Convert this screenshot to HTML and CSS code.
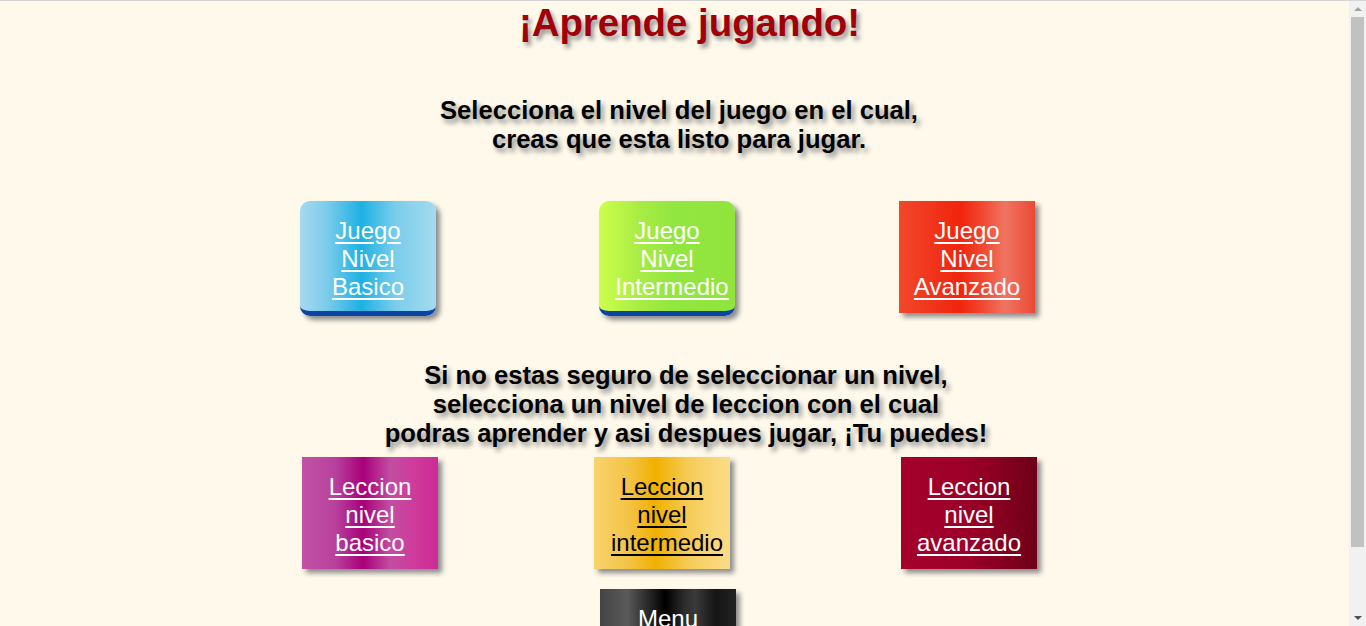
FILE: index.html
```html
<!DOCTYPE html>
<html lang="es">
<head>
<meta charset="utf-8">
<title>¡Aprende jugando!</title>
<link rel="stylesheet" href="styles.css">
</head>
<body>
  <h1 class="title">¡Aprende jugando!</h1>
  <p class="intro intro-top">Selecciona el nivel del juego en el cual,<br>creas que esta listo para jugar.</p>
  <div class="row row-games">
    <a class="btn btn-rounded btn-blue" href="#">Juego<br>Nivel<br>Basico</a>
    <a class="btn btn-rounded btn-green" href="#">Juego<br>Nivel<br><span class="lead">&nbsp;</span>Intermedio</a>
    <a class="btn btn-red" href="#">Juego<br>Nivel<br>Avanzado</a>
  </div>
  <p class="intro intro-mid">Si no estas seguro de seleccionar un nivel,<br>selecciona un nivel de leccion con el cual<br>podras aprender y asi despues jugar, ¡Tu puedes!</p>
  <div class="row row-lessons">
    <a class="btn btn-magenta" href="#">Leccion<br>nivel<br>basico</a>
    <a class="btn btn-gold" href="#">Leccion<br>nivel<br><span class="lead">&nbsp;</span>intermedio</a>
    <a class="btn btn-wine" href="#">Leccion<br>nivel<br>avanzado</a>
  </div>
  <div class="row row-menu">
    <a class="btn btn-black" href="#">Menu</a>
  </div>
  <div class="scrollbar" aria-hidden="true">
    <span class="sb-arrow sb-up"></span>
    <span class="sb-thumb"></span>
    <span class="sb-arrow sb-down"></span>
  </div>
</body>
</html>
```

FILE: styles.css
```css
html {
  background: #fef9ea;
  border-top: 1px solid #d4d4d4;
}
body {
  margin: 0;
  padding: 0 17px 10px 0;
  font-family: "Liberation Sans", Arial, sans-serif;
  background: #fef9ea;
}
.title {
  margin: 0;
  padding-left: 30px;
  text-align: center;
  font-size: 38.4px;
  font-weight: bold;
  color: #a00008;
  text-shadow: 3px 4px 4px #9a9a9a;
}
.intro {
  margin: 0;
  text-align: center;
  font-size: 25.6px;
  font-weight: bold;
  color: #000;
  text-shadow: 3px 4px 5px #8a8a8a;
}
.intro-top {
  margin-top: 51px;
  padding-left: 9px;
}
.intro-mid {
  margin-top: 45px;
  padding-left: 23px;
}
.row {
  display: flex;
}
.row-games {
  margin-top: 47px;
  padding-left: 300px;
}
.row-games .btn-green {
  margin-left: 163px;
}
.row-games .btn-red {
  margin-left: 164px;
}
.row-lessons {
  margin-top: 9px;
  padding-left: 302px;
}
.row-lessons .btn-gold {
  margin-left: 156px;
}
.row-lessons .btn-wine {
  margin-left: 171px;
}
.row-menu {
  margin-top: 20px;
  padding-left: 600px;
}
.btn {
  box-sizing: border-box;
  width: 136px;
  height: 112px;
  padding-top: 16px;
  text-align: center;
  font-size: 24px;
  line-height: 28px;
  color: #fff;
  text-decoration: underline;
  text-decoration-thickness: 2px;
  text-underline-offset: 3px;
  box-shadow: 4px 4px 5px #8c8c8c;
  white-space: nowrap;
}
.lead {
  display: inline-block;
  width: 10px;
}
.btn-rounded {
  height: 115px;
  border-radius: 10px;
  border-bottom: 5px solid #0a45a6;
}
.btn-blue {
  background: linear-gradient(90deg, #a6d9ef 0%, #7ccbeb 20%, #1db1e3 45%, #7acdeb 70%, #a3dbef 100%);
}
.btn-green {
  background: linear-gradient(90deg, #cefe4c 0%, #a8ec44 30%, #92e640 55%, #90e43c 100%);
}
.btn-red {
  background: linear-gradient(90deg, #f2482a 0%, #f0341c 25%, #f2240c 45%, #f04a34 62%, #f07462 78%, #ea4a34 100%);
}
.btn-magenta {
  background: linear-gradient(90deg, #c252a6 0%, #b8409c 25%, #a8007a 45%, #c24ea2 65%, #d0389a 85%, #cc2c96 100%);
}
.btn-gold {
  color: #000;
  background: linear-gradient(90deg, #f8d26c 0%, #f4c448 25%, #f0b000 45%, #f6cc58 70%, #fcdc8a 100%);
}
.btn-wine {
  background: linear-gradient(90deg, #a4002c 0%, #9c0028 50%, #6e0018 100%);
}
.btn-black {
  background: linear-gradient(90deg, #444 0%, #5a5a5a 20%, #2a2a2a 35%, #000 48%, #2c2c2c 62%, #3a3a3a 70%, #151515 85%, #222 100%);
}
.scrollbar {
  position: fixed;
  top: 1px;
  right: 0;
  bottom: 0;
  width: 17px;
  background: #f1f1f1;
  display: flex;
  flex-direction: column;
  align-items: center;
}
.sb-arrow {
  width: 0;
  height: 0;
  border-left: 4px solid transparent;
  border-right: 4px solid transparent;
}
.sb-up {
  margin-top: 6px;
  border-bottom: 4px solid #a3a3a3;
}
.sb-thumb {
  margin-top: 6px;
  width: 13px;
  height: 530px;
  background: #c1c1c1;
}
.sb-down {
  margin-top: auto;
  margin-bottom: 6px;
  border-top: 4px solid #505050;
}
```
